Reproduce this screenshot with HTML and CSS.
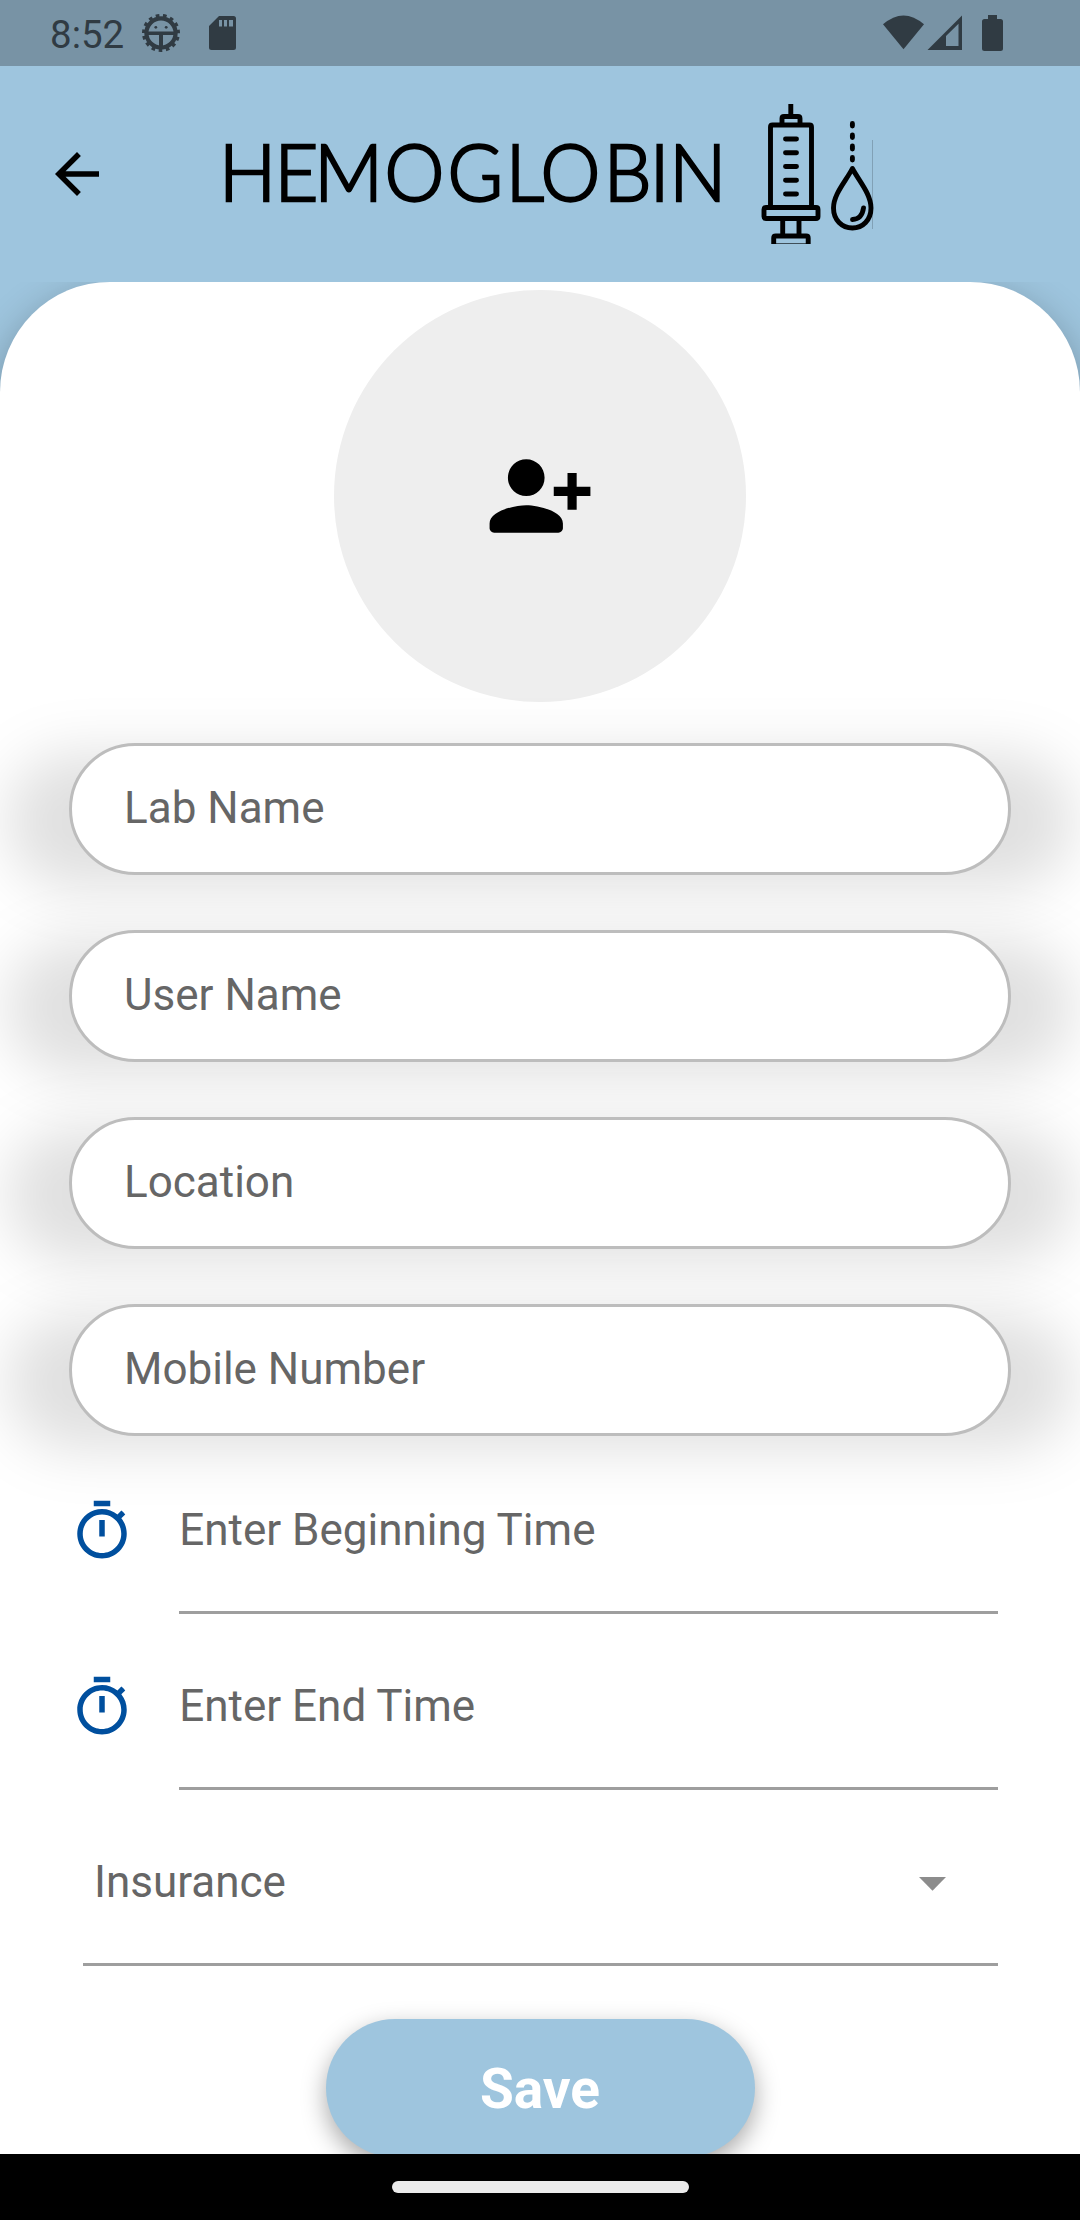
FILE: index.html
```html
<!DOCTYPE html>
<html lang="en">
<head>
<meta charset="utf-8">
<title>Hemoglobin</title>
<link rel="stylesheet" href="styles.css">
</head>
<body>
<div class="screen">
  <div class="status-bar">
    <span class="clock">8:52</span>
    <svg class="status-gear" viewBox="0 0 40 40">
      <circle cx="20" cy="20" r="17" fill="none" stroke="currentColor" stroke-width="4" stroke-dasharray="3.560 3.560" transform="rotate(180 20 20)"/>
      <circle cx="20" cy="20" r="14.600" fill="none" stroke="currentColor" stroke-width="4.200"/>
      <path d="M5 18.500h30v3.400H22v13h-4v-13H5z" fill="currentColor"/>
      <circle cx="14.800" cy="14.300" r="1.400" fill="currentColor"/>
      <circle cx="25.200" cy="14.300" r="1.400" fill="currentColor"/>
    </svg>
    <svg class="status-sd" viewBox="0 0 27 34">
      <path fill="currentColor" fill-rule="evenodd" d="M10 0h14.500q2.500 0 2.500 2.500v29q0 2.500-2.500 2.500H2.500Q0 34 0 31.500V10zM10 4v6.500h3V4zm5 0v6.500h3V4zm5 0v6.500h4V4z"/>
    </svg>
    <svg class="status-right" viewBox="883 15 121 36">
      <path fill="currentColor" d="M883 24.300Q903.500 6.500 924 24.300L903.500 49.300z"/>
      <path fill="currentColor" fill-rule="evenodd" d="M927.500 50L962 15.500V50zM946 46h12.500V23.700L946 36z"/>
      <path fill="currentColor" d="M988 15h9v4h3.500q2.500 0 2.500 2.500v27q0 2.500-2.500 2.500h-16q-2.500 0-2.500-2.500v-27q0-2.500 2.500-2.500h3.500z"/>
    </svg>
  </div>

  <header class="app-bar">
    <svg class="back" viewBox="0 0 24 24"><path d="M20 11H7.830l5.590-5.590L12 4l-8 8 8 8 1.410-1.410L7.830 13H20v-2z"/></svg>
    <svg class="logo" viewBox="225 104 648 140">
      <text class="logo-text" transform="scale(.97 1)" y="201" x="225.800 283 324 396.500 461.300 521.300 557.300 622.300 669.800 690">HEMOGLOBIN</text>
      <g fill="none" stroke="#000" stroke-width="4.900" stroke-linejoin="round">
        <path d="M790.800 104v13M782 123v-4.500q0-2 2-2h14q2 0 2 2v4.500M770.500 207v-80q0-2 2-2h37q2 0 2 2v80M766 207.500h50q2 0 2 2v7q0 2-2 2h-50q-2 0-2-2v-7q0-2 2-2zM782.700 219v16M799 219v16M773.700 244v-6q0-2 2-2h30.500q2 0 2 2v6"/>
        <path stroke-width="1" opacity=".6" d="M776 243.500h30"/>
        <path stroke-linecap="round" d="M785.500 139h11M785.500 152.700h11M785.500 166.500h11M785.500 180.200h11M785.500 194h11"/>
        <path stroke-linecap="round" d="M852.400 123.500v2.500M852.400 135v2.500M852.400 146v3M852.400 157.500v2.500M852.400 168.500C846 181 833.500 194 833.500 208C833.500 220 842 228 852.400 228S871 220 871 208C871 194 859 181 852.400 168.500zM863.500 208Q862 219 852.500 219.500"/>
        <path stroke-width="1" opacity=".18" d="M872.500 140v89"/>
      </g>
    </svg>
  </header>

  <main class="body">
    <div class="card">
      <div class="avatar">
        <svg viewBox="0 0 24 24"><path d="M13 8c0-2.210-1.790-4-4-4S5 5.790 5 8s1.790 4 4 4 4-1.790 4-4zm2 2v2h3v3h2v-3h3v-2h-3V7h-2v3h-3zM1 18v1c0 .550.450 1 1 1h14c.550 0 1-.450 1-1v-1c0-2.660-5.330-4-8-4s-8 1.340-8 4z"/></svg>
      </div>
      <div class="fields">
        <div class="field"><div class="pill">Lab Name</div></div>
        <div class="field"><div class="pill">User Name</div></div>
        <div class="field"><div class="pill">Location</div></div>
        <div class="field"><div class="pill">Mobile Number</div></div>
      </div>
      <div class="row">
        <svg class="timer" viewBox="0 0 24 24"><path d="M15 1H9v2h6V1zm-4 13h2V8h-2v6zm8.030-6.610l1.420-1.420c-.430-.510-.900-.990-1.410-1.410l-1.420 1.420C16.070 4.740 14.120 4 12 4c-4.970 0-9 4.030-9 9s4.020 9 9 9 9-4.030 9-9c0-2.120-.740-4.070-1.970-5.610zM12 20c-3.870 0-7-3.130-7-7s3.130-7 7-7 7 3.130 7 7-3.130 7-7 7z"/></svg>
        <div class="line-input">Enter Beginning Time</div>
      </div>
      <div class="row">
        <svg class="timer" viewBox="0 0 24 24"><path d="M15 1H9v2h6V1zm-4 13h2V8h-2v6zm8.030-6.610l1.420-1.420c-.430-.510-.900-.990-1.410-1.410l-1.420 1.420C16.070 4.740 14.120 4 12 4c-4.970 0-9 4.030-9 9s4.020 9 9 9 9-4.030 9-9c0-2.120-.740-4.070-1.970-5.610zM12 20c-3.870 0-7-3.130-7-7s3.130-7 7-7 7 3.130 7 7-3.130 7-7 7z"/></svg>
        <div class="line-input">Enter End Time</div>
      </div>
      <div class="row">
        <div class="line-input select">
          <span>Insurance</span>
          <svg class="caret" viewBox="0 0 27 14"><path d="M0 0h27L13.500 13.700z"/></svg>
        </div>
      </div>
      <div class="save">Save</div>
    </div>
  </main>

  <div class="nav-bar"><div class="nav-pill"></div></div>
</div>
</body>
</html>
```

FILE: styles.css
```css
* { box-sizing: border-box; }

body {
  margin: 0;
  font-family: Roboto, "Liberation Sans", sans-serif;
}

svg { display: block; flex: none; }

.screen {
  width: 1080px;
  height: 2220px;
  display: flex;
  flex-direction: column;
  overflow: hidden;
  background: #9ec5de;
}

.status-bar {
  flex: none;
  height: 66px;
  display: flex;
  align-items: center;
  padding: 0 76px 0 50px;
  background: #7893a5;
  color: #303b43;
}

.clock { font-size: 38.5px; line-height: 66px; padding-top: 3px; }
.status-gear { width: 40px; height: 40px; margin-left: 17px; }
.status-sd { width: 27px; height: 34px; margin-left: 28px; }
.status-right { width: 121px; height: 36px; margin-left: auto; }

.app-bar {
  flex: none;
  height: 215.66px;
  display: flex;
  align-items: center;
  padding-left: 44px;
}

.back { width: 66px; height: 66px; }
.logo { width: 648px; height: 140px; margin-left: 115px; overflow: visible; }

.logo-text {
  font-family: Lato, sans-serif;
  font-size: 78px;
  font-weight: 300;
  stroke: #000;
  stroke-width: 2.500px;
}

.body {
  flex: 1;
  min-height: 0;
  overflow: hidden;
}

.card {
  height: 2000px;
  padding-top: 8.250px;
  border-radius: 110px 110px 0 0;
  background: #fff;
  box-shadow: 0 14px 40px rgba(0, 0, 0, .3);
}

.avatar {
  width: 412.500px;
  height: 412.500px;
  margin: 0 auto;
  border-radius: 50%;
  background: #eee;
  display: flex;
  align-items: center;
  justify-content: center;
}

.avatar svg { width: 110px; height: 110px; }

.fields {
  display: flex;
  flex-direction: column;
  gap: 55.500px;
  padding: 41px 69px 0;
}

.field {
  position: relative;
  height: 131.500px;
}

/* soft shade that reaches wider than the pill itself */
.field::before {
  content: "";
  position: absolute;
  inset: 10px -62px -14px;
  border-radius: 66px;
  background: rgba(0, 0, 0, .12);
  filter: blur(28px);
}

.pill {
  position: relative;
  height: 100%;
  display: flex;
  align-items: center;
  padding: 0 0 2px 52px;
  border: 3px solid #bdbdbd;
  border-radius: 66px;
  background: #fff;
  font-size: 44px;
  color: #666;
}

.row {
  position: relative;
  height: 176px;
  display: flex;
  align-items: stretch;
  padding: 0 82.500px 0 68.750px;
}

.fields + .row { margin-top: 2px; }

.timer {
  width: 66px;
  height: 66px;
  margin: 60px 44px 0 0;
  fill: #004f9e;
}

.line-input {
  flex: 1;
  display: flex;
  align-items: center;
  padding-top: 12px;
  padding-left: .500px;
  border-bottom: 3px solid #9e9e9e;
  font-size: 44px;
  color: #666;
}

.select {
  margin-left: 13.750px;
  padding-left: 11.500px;
  padding-right: 52px;
  justify-content: space-between;
}

.caret { width: 27px; height: 14px; margin-top: 3px; fill: #8c8c8c; }

.save {
  width: 429px;
  height: 137.500px;
  margin: 53.500px auto 0;
  border-radius: 69px;
  background: #9ec5de;
  box-shadow: 0 9px 24px rgba(0, 0, 0, .34);
  color: #fff;
  font-size: 55px;
  font-weight: 700;
  line-height: 140px;
  text-align: center;
}

.nav-bar {
  flex: none;
  height: 66px;
  background: #000;
  display: flex;
  align-items: center;
  justify-content: center;
}

.nav-pill {
  width: 297px;
  height: 12px;
  border-radius: 6px;
  background: #ebebeb;
}
```
